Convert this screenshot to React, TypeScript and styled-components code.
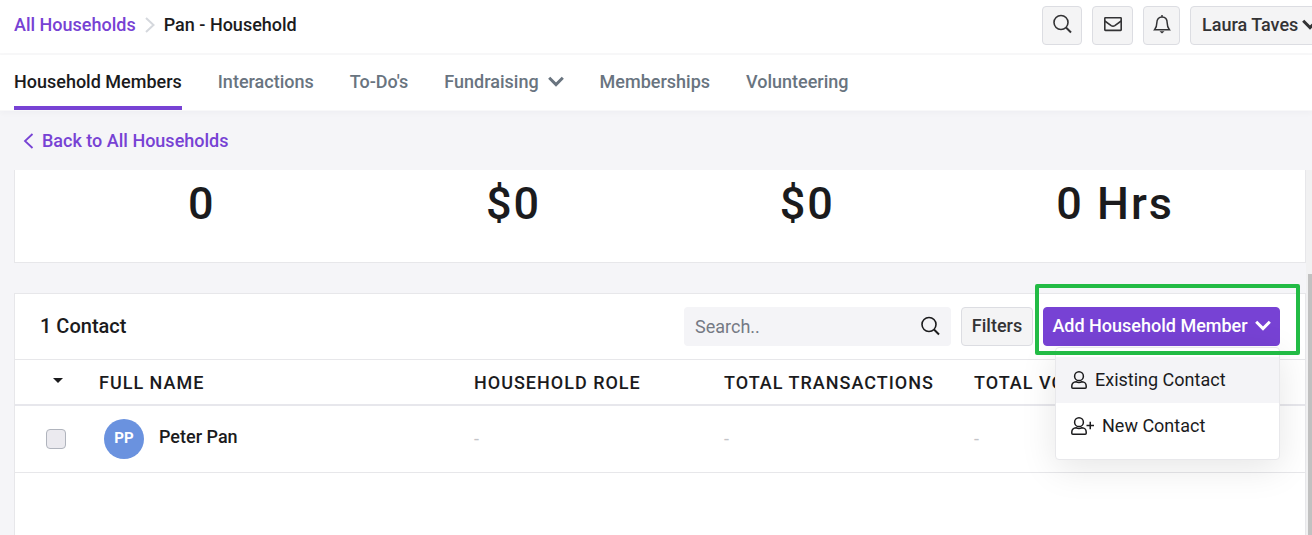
import React from "react";
import styled, { createGlobalStyle } from "styled-components";

const GlobalStyle = createGlobalStyle`
  * { box-sizing: border-box; }
  body {
    margin: 0;
    background: #f5f5f8;
    color: #1b1b1d;
    font-family: Roboto, "Liberation Sans", sans-serif;
    font-size: 18px;
    font-weight: 500;
    line-height: 24px;
  }
  button, input { font: inherit; color: inherit; }
  a { color: inherit; text-decoration: none; }
`;

const Page = styled.div`
  display: flex;
  flex-direction: column;
  height: 100vh;
  overflow: hidden;
`;

const TopBar = styled.header`
  flex: none;
  display: flex;
  align-items: flex-start;
  justify-content: space-between;
  padding: 6px 0 8px 14px;
  background: #fff;
  border-bottom: 2px solid #f8f8f9;
  overflow: hidden;
`;

const Breadcrumb = styled.nav`
  display: flex;
  align-items: center;
  gap: 9px;
  padding-top: 7px;
  white-space: nowrap;
`;

const AccentLink = styled.a`
  display: inline-flex;
  align-items: center;
  gap: 8px;
  color: #7742d4;
`;

const Actions = styled.div`
  display: flex;
  gap: 10px;
  margin-right: -12px;
`;

const Button = styled.button<{ $width?: number }>`
  display: inline-flex;
  align-items: center;
  justify-content: center;
  flex: none;
  gap: 4px;
  height: 39px;
  width: ${(p) => (p.$width ? `${p.$width}px` : "auto")};
  padding: 0 9px 2px;
  border: 1px solid #dcdde2;
  border-radius: 4px;
  background: #f4f4f5;
  color: #333335;
  white-space: nowrap;
`;

const UserButton = styled(Button)`
  justify-content: flex-start;
  padding-left: 11px;
`;

const PrimaryButton = styled(Button)`
  gap: 7px;
  border-color: #7742d4;
  background: #7742d4;
  color: #fff;
`;

const Tabs = styled.nav`
  flex: none;
  display: flex;
  gap: 36px;
  padding: 0 14px;
  background: #fff;
  border-bottom: 1px solid #f8f8f9;
  box-shadow: 0 2px 6px rgba(30, 30, 50, 0.03);
  white-space: nowrap;
`;

const Tab = styled.a<{ $active?: boolean }>`
  display: flex;
  align-items: center;
  gap: 9px;
  height: 55px;
  padding-top: 2px;
  border-bottom: 4px solid ${(p) => (p.$active ? "#7742d4" : "transparent")};
  color: ${(p) => (p.$active ? "#1b1b1d" : "#69747f")};
`;

const BackBar = styled.div`
  flex: none;
  display: flex;
  padding: 18px 23px 17px;
`;

const ScrollArea = styled.div`
  flex: 1;
  min-height: 0;
  display: flex;
`;

const Content = styled.main`
  flex: 1;
  min-width: 0;
  display: flex;
  flex-direction: column;
  gap: 30px;
  padding-left: 14px;
`;

const Track = styled.div`
  display: flex;
  flex-direction: column;
  width: 6px;
  padding: 104px 0 0 2px;
  background: #f1f1f2;
`;

const Thumb = styled.div`
  flex: 1;
  background: #c1c1c1;
`;

const Stats = styled.section`
  display: grid;
  grid-template-columns: 312fr 312fr 276fr 340fr;
  padding: 6px 20px 30px 31px;
  border: 1px solid #e7e7ea;
  border-top: 0;
  background: #fff;
`;

const Stat = styled.div`
  font-size: 45px;
  line-height: 56px;
  letter-spacing: 2px;
  text-align: center;
`;

const Card = styled.section`
  flex: 1;
  border: 1px solid #e7e7ea;
  border-bottom: 0;
  background: #fff;
`;

const CardHeader = styled.div`
  display: flex;
  align-items: flex-start;
  justify-content: space-between;
  padding: 13px 25px;
`;

const CardTitle = styled.h2`
  margin: 0;
  padding-top: 7px;
  font-size: 20px;
  line-height: 24px;
  font-weight: 500;
`;

const Tools = styled.div`
  display: flex;
  gap: 10px;
`;

const SearchBox = styled.label`
  display: flex;
  align-items: center;
  width: 267px;
  height: 39px;
  padding: 0 11px;
  border-radius: 4px;
  background: #f4f4f7;
`;

const SearchInput = styled.input`
  flex: 1;
  min-width: 0;
  padding: 0;
  border: 0;
  outline: 0;
  background: none;
  font-weight: 400;
  &::placeholder { color: #757a84; opacity: 1; }
`;

const MenuAnchor = styled.div`
  position: relative;
`;

const Highlight = styled.div`
  position: absolute;
  inset: -23px -20px -9px -8px;
  border: 4px solid #22bb45;
  border-radius: 2px;
  pointer-events: none;
  z-index: 2;
`;

const Menu = styled.div`
  position: absolute;
  top: 40px;
  right: 0;
  width: 225px;
  padding: 9px 0 10px;
  border: 1px solid #e8e8eb;
  border-radius: 4px;
  background: #fff;
  box-shadow: 0 8px 36px rgba(0, 0, 0, 0.1);
  z-index: 1;
`;

const MenuItem = styled.button<{ $active?: boolean }>`
  display: flex;
  align-items: center;
  gap: 8px;
  width: 100%;
  height: 46px;
  padding: 0 15px;
  border: 0;
  background: ${(p) => (p.$active ? "#f4f4f7" : "#fff")};
  font-weight: 400;
`;

const Table = styled.table`
  width: 100%;
  table-layout: fixed;
  border-collapse: separate;
  border-spacing: 0;
`;

const Th = styled.th<{ $width?: number }>`
  width: ${(p) => (p.$width ? `${p.$width}px` : "auto")};
  height: 47px;
  padding: 2px 0 0;
  border-top: 1px solid #e7e7ea;
  border-bottom: 2px solid #e7e7ec;
  font-weight: 500;
  letter-spacing: 1px;
  text-align: left;
  white-space: nowrap;
`;

const Td = styled.td`
  height: 67px;
  padding: 0;
  border-bottom: 1px solid #e7e7ea;
  color: #c4c4c8;
  font-weight: 400;
`;

const SortButton = styled.button`
  display: block;
  margin-left: 38px;
  padding: 0 0 5px;
  border: 0;
  background: none;
  line-height: 0;
`;

const Checkbox = styled.input`
  appearance: none;
  display: block;
  width: 20px;
  height: 20px;
  margin: 0 0 0 31px;
  border: 1px solid #b0b4bd;
  border-radius: 4px;
  background: #ebeaef;
`;

const Person = styled.a`
  display: flex;
  align-items: center;
  gap: 15px;
  padding-left: 5px;
  color: #1b1b1d;
  font-weight: 500;
`;

const Avatar = styled.span`
  width: 40px;
  height: 40px;
  border-radius: 50%;
  background: #6a92df;
  color: #fff;
  font-size: 15px;
  font-weight: 700;
  line-height: 38px;
  text-align: center;
`;

const PersonName = styled.span`
  padding-bottom: 4px;
`;

const Icon = styled.svg`
  flex: none;
  display: block;
  fill: none;
  stroke: currentColor;
`;

const Separator = styled(Icon)`
  color: #d5d8dd;
`;

const ChevronDown = () => (
  <Icon width="16" height="12" viewBox="0 0 16 12" strokeWidth="3">
    <path d="M1.200 1.800 8 8.600l6.800-6.800" />
  </Icon>
);

const SearchIcon = () => (
  <Icon width="20" height="22" viewBox="0 0 20 22" strokeWidth="1.600">
    <circle cx="9" cy="8.500" r="7" />
    <path d="m14 13.500 5 5" strokeWidth="2" />
  </Icon>
);

const MailIcon = () => (
  <Icon width="20" height="18" viewBox="0 0 20 18" strokeWidth="1.600">
    <rect x="1.800" y="1.800" width="16.400" height="12.600" rx=".6" />
    <path d="m1.800 5 6.400 4.600q1.800 1.200 3.600 0L18.200 5" />
  </Icon>
);

const BellIcon = () => (
  <Icon width="18" height="22" viewBox="0 0 18 22" strokeWidth="1.500">
    <path d="M9 1v2M1.600 15.800h14.800c-1.600-2-2.200-3.300-2.200-6.800C14.200 5.200 12 3 9 3S3.800 5.200 3.800 9c0 3.500-.6 4.800-2.200 6.800Z" />
    <path d="M6.500 17.200h5L9 19.500Z" fill="currentColor" stroke="none" />
  </Icon>
);

const UserIcon = ({ plus }: { plus?: boolean }) => (
  <Icon width={plus ? 23 : 16} height="18" viewBox={plus ? "0 0 23 18" : "0 0 16 18"} strokeWidth="1.500">
    <circle cx="8" cy="5.200" r="4.400" />
    <path d="M5 10.800C2.500 10.800.8 12.800.8 15v1.200q0 1 1 1h12.400q1 0 1-1V15c0-2.200-1.700-4.200-4.200-4.200Q8 12.200 5 10.800Z" />
    {plus && <path d="M15.500 8.500h7.500M19.250 4.800v7.400" />}
  </Icon>
);

const columns = ["HOUSEHOLD ROLE", "TOTAL TRANSACTIONS"];

export default function App() {
  return (
    <Page>
      <GlobalStyle />
      <TopBar>
        <Breadcrumb aria-label="Breadcrumb">
          <AccentLink href="#households">All Households</AccentLink>
          <Separator width="10" height="16" viewBox="0 0 10 16" strokeWidth="2">
            <path d="m1 1 7.500 7L1 15" />
          </Separator>
          <span>Pan - Household</span>
        </Breadcrumb>
        <Actions>
          <Button $width={40} aria-label="Search"><SearchIcon /></Button>
          <Button $width={41} aria-label="Messages"><MailIcon /></Button>
          <Button $width={37} aria-label="Notifications"><BellIcon /></Button>
          <UserButton $width={134}>Laura Taves <ChevronDown /></UserButton>
        </Actions>
      </TopBar>

      <Tabs aria-label="Household sections">
        <Tab href="#members" $active>Household Members</Tab>
        <Tab href="#interactions">Interactions</Tab>
        <Tab href="#todos">To-Do's</Tab>
        <Tab href="#fundraising">Fundraising <ChevronDown /></Tab>
        <Tab href="#memberships">Memberships</Tab>
        <Tab href="#volunteering">Volunteering</Tab>
      </Tabs>

      <BackBar>
        <AccentLink href="#households">
          <Icon width="11" height="16" viewBox="0 0 11 16" strokeWidth="1.800">
            <path d="M9.500 1 2 8l7.500 7" />
          </Icon>
          Back to All Households
        </AccentLink>
      </BackBar>

      <ScrollArea>
        <Content>
          <Stats>
            <Stat>0</Stat>
            <Stat>$0</Stat>
            <Stat>$0</Stat>
            <Stat>0 Hrs</Stat>
          </Stats>

          <Card>
            <CardHeader>
              <CardTitle>1 Contact</CardTitle>
              <Tools>
                <SearchBox>
                  <SearchInput type="text" placeholder="Search.." aria-label="Search contacts" />
                  <SearchIcon />
                </SearchBox>
                <Button $width={72}>Filters</Button>
                <MenuAnchor>
                  <PrimaryButton $width={237}>Add Household Member <ChevronDown /></PrimaryButton>
                  <Menu>
                    <MenuItem $active><UserIcon /> Existing Contact</MenuItem>
                    <MenuItem><UserIcon plus /> New Contact</MenuItem>
                  </Menu>
                  <Highlight />
                </MenuAnchor>
              </Tools>
            </CardHeader>
            <Table>
              <thead>
                <tr>
                  <Th $width={84}>
                    <SortButton aria-label="Selection options">
                      <Icon width="10" height="5" viewBox="0 0 10 5">
                        <path d="M0 0h10L5 5Z" fill="currentColor" stroke="none" />
                      </Icon>
                    </SortButton>
                  </Th>
                  <Th $width={375}>FULL NAME</Th>
                  {columns.map((c) => (
                    <Th key={c} $width={250}>{c}</Th>
                  ))}
                  <Th>TOTAL VOLUNTEERING</Th>
                </tr>
              </thead>
              <tbody>
                <tr>
                  <Td><Checkbox type="checkbox" aria-label="Select Peter Pan" /></Td>
                  <Td>
                    <Person href="#peter-pan">
                      <Avatar>PP</Avatar>
                      <PersonName>Peter Pan</PersonName>
                    </Person>
                  </Td>
                  <Td>-</Td>
                  <Td>-</Td>
                  <Td>-</Td>
                </tr>
              </tbody>
            </Table>
          </Card>
        </Content>
        <Track><Thumb /></Track>
      </ScrollArea>
    </Page>
  );
}
